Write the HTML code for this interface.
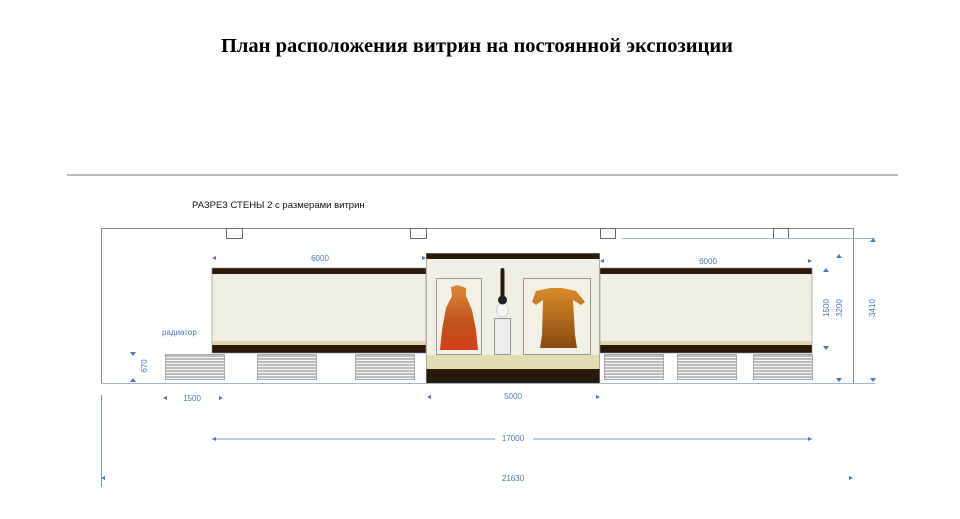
<!DOCTYPE html>
<html><head><meta charset="utf-8"><style>
html,body{margin:0;padding:0;background:#fff;width:960px;height:519px;overflow:hidden}
svg{display:block}
</style></head><body>
<svg width="960" height="519" viewBox="0 0 960 519" xmlns="http://www.w3.org/2000/svg">
<defs>
<pattern id="rad" width="4" height="3" patternUnits="userSpaceOnUse"><rect width="4" height="3" fill="#bdbdbd"/><rect y="0" width="4" height="1" fill="#f4f4f4"/></pattern>
<linearGradient id="g1" x1="0" y1="0" x2="0" y2="1"><stop offset="0" stop-color="#d98a3a"/><stop offset="0.6" stop-color="#c0501c"/><stop offset="1" stop-color="#d4401a"/></linearGradient>
<linearGradient id="g2" x1="0" y1="0" x2="0" y2="1"><stop offset="0" stop-color="#d88b2a"/><stop offset="1" stop-color="#8a4a10"/></linearGradient>
</defs>
<text x="477" y="52" text-anchor="middle" font-family="Liberation Serif, serif" font-weight="bold" font-size="20.5" fill="#000">План расположения витрин на постоянной экспозиции</text>
<line x1="67" y1="175" x2="898" y2="175" stroke="#777" stroke-width="1"/>
<text x="192" y="208" font-family="Liberation Sans, sans-serif" font-size="9.5" fill="#111">РАЗРЕЗ СТЕНЫ 2 с размерами витрин</text>
<rect x="101.5" y="228.5" width="752" height="155" fill="#fff" stroke="#888" stroke-width="1"/>
<g fill="#fff" stroke="#666"><rect x="226.5" y="228.5" width="16" height="10"/><rect x="410.5" y="228.5" width="16" height="10"/><rect x="600.5" y="228.5" width="15" height="10"/><rect x="773.5" y="228.5" width="15" height="10"/></g>
<line x1="622" y1="238.5" x2="875" y2="238.5" stroke="#9cb8d8"/>
<rect x="212" y="268" width="214" height="6" fill="#2a1a0c"/>
<rect x="212" y="274" width="214" height="67" fill="#f0efe3"/>
<rect x="212" y="341" width="214" height="4" fill="#e3d8ad"/>
<rect x="212" y="345" width="214" height="8" fill="#2a1a0c"/>
<rect x="212" y="268" width="214" height="85" fill="none" stroke="#888" stroke-width="0.6"/>
<rect x="600" y="268" width="212" height="6" fill="#2a1a0c"/>
<rect x="600" y="274" width="212" height="67" fill="#f0efe3"/>
<rect x="600" y="341" width="212" height="4" fill="#e3d8ad"/>
<rect x="600" y="345" width="212" height="8" fill="#2a1a0c"/>
<rect x="600" y="268" width="212" height="85" fill="none" stroke="#888" stroke-width="0.6"/>
<rect x="426" y="253" width="174" height="6" fill="#2a1a0c"/>
<rect x="426" y="259" width="174" height="96" fill="#f0efe3"/>
<rect x="426" y="355" width="174" height="14" fill="#e6dcb2"/>
<rect x="426" y="369" width="174" height="14" fill="#2a1a0c"/>
<rect x="426.5" y="253.5" width="173" height="130" fill="none" stroke="#888" stroke-width="0.6"/>
<rect x="436.5" y="278.5" width="45" height="76" fill="#f3f1e6" stroke="#999"/>
<rect x="523.5" y="278.5" width="67" height="76" fill="#f3f1e6" stroke="#999"/>
<path d="M451 287 L458 285 L466 288 L466 296 L472 310 L476 330 L478 350 L440 350 L442 330 L446 308 L452 296 Z" fill="url(#g1)"/>
<path d="M536 291 L550 288 L562 288 L576 291 L585 302 L581 305 L573 300 L575 335 L577 348 L540 348 L542 335 L543 300 L536 305 L532 302 Z" fill="url(#g2)"/>
<rect x="494.5" y="318.5" width="16" height="36" fill="#ececef" stroke="#999"/>
<ellipse cx="502.5" cy="310" rx="6" ry="7" fill="#f4f4f4" stroke="#aaa" stroke-width="0.5"/>
<circle cx="502.5" cy="300" r="4.5" fill="#222"/>
<rect x="500.5" y="268" width="4" height="30" rx="2" fill="#2b1a10"/>
<g stroke="#999" stroke-width="0.8">
<rect x="165.5" y="354.5" width="59" height="25" fill="url(#rad)"/>
<rect x="257.5" y="354.5" width="59" height="25" fill="url(#rad)"/>
<rect x="355.5" y="354.5" width="59" height="25" fill="url(#rad)"/>
<rect x="604.5" y="354.5" width="59" height="25" fill="url(#rad)"/>
<rect x="677.5" y="354.5" width="59" height="25" fill="url(#rad)"/>
<rect x="753.5" y="354.5" width="59" height="25" fill="url(#rad)"/>
</g>
<line x1="101" y1="383.5" x2="875" y2="383.5" stroke="#9cb8d8"/>
<g font-family="Liberation Sans, sans-serif" font-size="8" fill="#4a7ab5">
<text x="320" y="261" text-anchor="middle">6000</text>
<text x="708" y="264" text-anchor="middle">6000</text>
<text x="162" y="335">радиатор</text>
<text x="192" y="401" text-anchor="middle">1500</text>
<text x="513" y="399" text-anchor="middle">5000</text>
<text x="513" y="441" text-anchor="middle">17000</text>
<text x="513" y="481" text-anchor="middle">21630</text>
<text transform="translate(147,366) rotate(-90)" text-anchor="middle">670</text>
<text transform="translate(829,308) rotate(-90)" text-anchor="middle">1500</text>
<text transform="translate(842,308) rotate(-90)" text-anchor="middle">3200</text>
<text transform="translate(875,308) rotate(-90)" text-anchor="middle">3410</text>
</g>
<g stroke="#4a7ab5" stroke-width="0.8">
<line x1="212" y1="439" x2="495" y2="439"/><line x1="533" y1="439" x2="812" y2="439"/>
<line x1="101.5" y1="395" x2="101.5" y2="487"/>
</g>
<g fill="#4a7ab5">
<path d="M212 439 l4 -2 v4z"/><path d="M812 439 l-4 -2 v4z"/>
<path d="M212 258 l4 -2 v4z"/><path d="M426 258 l-4 -2 v4z"/>
<path d="M600 261 l4 -2 v4z"/><path d="M812 261 l-4 -2 v4z"/>
<path d="M163 398 l4 -2 v4z"/><path d="M223 398 l-4 -2 v4z"/>
<path d="M427 397 l4 -2 v4z"/><path d="M600 397 l-4 -2 v4z"/>
<path d="M101 478 l4 -2 v4z"/><path d="M853 478 l-4 -2 v4z"/>
<path d="M133 356 l-3 -4 h6z"/>
<path d="M133 378 l3 4 h-6z"/>
<path d="M826 268 l3 4 h-6z"/>
<path d="M826 350 l-3 -4 h6z"/>
<path d="M839 254 l3 4 h-6z"/>
<path d="M839 382 l-3 -4 h6z"/>
<path d="M873 238 l3 4 h-6z"/>
<path d="M873 382 l-3 -4 h6z"/>
</g>
</svg>
</body></html>
